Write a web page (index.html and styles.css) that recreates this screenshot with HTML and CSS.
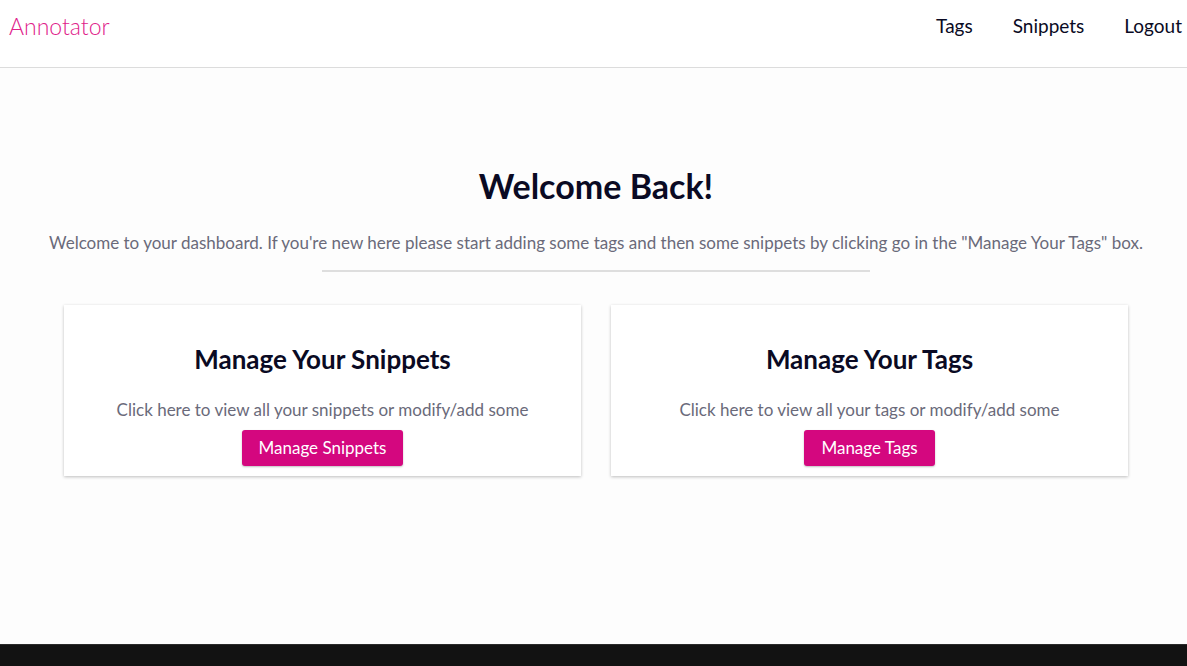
FILE: index.html
```html
<!DOCTYPE html>
<html lang="en">
<head>
<meta charset="utf-8">
<title>Annotator</title>
<link rel="stylesheet" href="styles.css">
</head>
<body>
<header class="navbar">
  <a class="brand" href="#">Annotator</a>
  <nav class="nav-links">
    <a href="#">Tags</a>
    <a href="#">Snippets</a>
    <a href="#">Logout</a>
  </nav>
</header>
<main class="main">
  <h1 class="title">Welcome Back!</h1>
  <p class="intro">Welcome to your dashboard. If you're new here please start adding some tags and then some snippets by clicking go in the "Manage Your Tags" box.</p>
  <hr class="divider">
  <div class="cards">
    <section class="card">
      <h2 class="card-title">Manage Your Snippets</h2>
      <p class="card-text">Click here to view all your snippets or modify/add some</p>
      <a class="btn" href="#">Manage Snippets</a>
    </section>
    <section class="card">
      <h2 class="card-title">Manage Your Tags</h2>
      <p class="card-text">Click here to view all your tags or modify/add some</p>
      <a class="btn" href="#">Manage Tags</a>
    </section>
  </div>
</main>
<footer class="footer"></footer>
</body>
</html>
```
FILE: styles.css
```css
* { box-sizing: border-box; }
html, body { margin: 0; padding: 0; }
body {
  font-family: Lato, "Open Sans", sans-serif;
  background: #fdfdfd;
  color: #0a0a23;
}
a { text-decoration: none; }
.navbar {
  height: 68px;
  background: #fff;
  border-bottom: 1px solid #dcdcdc;
  display: flex;
  align-items: center;
  justify-content: space-between;
  padding: 0 5px 0 9px;
}
.brand {
  font-size: 23px;
  font-weight: 300;
  color: #e0218a;
  margin-top: -16px;
}
.nav-links {
  display: flex;
  gap: 40px;
  margin-top: -16px;
}
.nav-links a {
  font-size: 19px;
  color: #0a0a23;
}
.main {
  min-height: 576px;
  display: flex;
  flex-direction: column;
  align-items: center;
  padding-top: 98px;
  padding-left: 5px;
}
.title {
  margin: 0;
  font-size: 34px;
  font-weight: 700;
  line-height: 40px;
}
.intro {
  margin: 25px 0 0;
  font-size: 17px;
  color: #6a6a7a;
  line-height: 24px;
}
.divider {
  width: 548px;
  margin: 15px 0 0;
  border: 0;
  border-top: 2px solid #dedede;
}
.cards {
  margin-top: 33px;
  width: 1064px;
  display: grid;
  grid-template-columns: 1fr 1fr;
  gap: 30px;
}
.card {
  background: #fff;
  height: 171px;
  box-shadow: 0 1px 3px rgba(0,0,0,0.25);
  display: flex;
  flex-direction: column;
  align-items: center;
  padding-top: 38px;
}
.card-title {
  margin: 0;
  font-size: 26px;
  font-weight: 700;
  line-height: 32px;
}
.card-text {
  margin: 23px 0 0;
  font-size: 17px;
  color: #6a6a7a;
  line-height: 24px;
}
.btn {
  margin-top: 8px;
  background: #d4077f;
  color: #fff;
  font-size: 17px;
  height: 36px;
  line-height: 36px;
  padding: 0 17px;
  border-radius: 3px;
  box-shadow: 0 1px 2px rgba(0,0,0,0.25);
}
.footer {
  height: 22px;
  background: #121212;
  border-top: 1px solid #2a2a2a;
}
```
